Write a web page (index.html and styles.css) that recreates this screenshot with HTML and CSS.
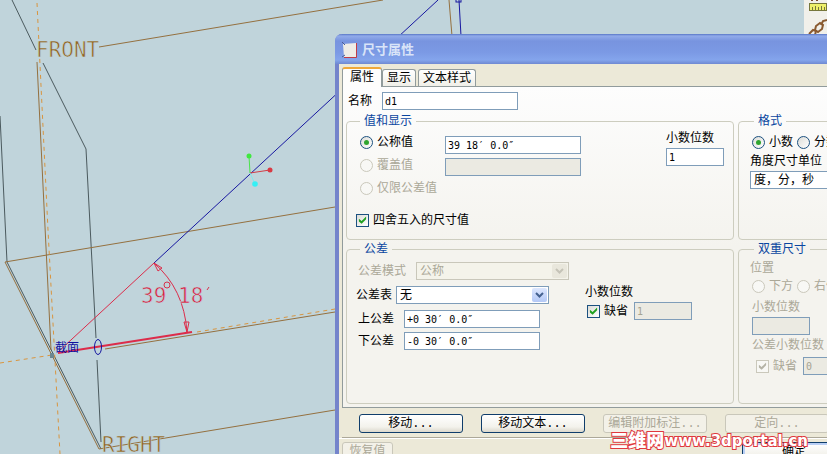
FILE: index.html
```
<!DOCTYPE html>
<html lang="zh-CN">
<head>
  <meta charset="UTF-8">
  <title>尺寸属性</title>
  <link rel="stylesheet" href="styles.css">
</head>
<body>
  <!-- Sketch view -->
  <svg class="sketch" aria-hidden="true">
    <g class="edge">
      <path d="M12 0L36 50M43 63L86 149L96 338M97 360L101 442"/>
      <path d="M0 116L7 262L101 449"/>
    </g>
    <g class="datum">
      <path d="M99 47L383 0M5 262L335 207M5 262L99 449L335 410"/>
      <path d="M37 62L51 350M105 349L335 312M449 0L452 36"/>
    </g>
    <g class="axis">
      <path d="M37 3L48 230L60 454M0 363L52 355M197 332L335 309"/>
    </g>
    <g class="curve">
      <path d="M154 263L438 0M459 0L461 36"/>
      <rect x="456" y="-2" width="5" height="4"/>
    </g>
    <g class="dim">
      <path d="M58 352L154 263"/>
      <path d="M58 353L192 332" stroke-width="2"/>
      <path d="M154 263Q184 289 187 332M154 263L158 271L162 268ZM187 332L184 322L189 322Z"/>
    </g>
    <path d="M250 173L249 156" stroke="#4be34b"/>
    <path d="M250 173L270 170" stroke="#d23c46"/>
    <path d="M250 173L255 184" stroke="#7fe8f0"/>
    <circle cx="249" cy="156" r="2.5" fill="#3fe83f"/>
    <circle cx="270" cy="170" r="2.5" fill="#d83a44"/>
    <circle cx="255" cy="184" r="2.8" fill="#35f0f5"/>
    <rect x="50" y="353" width="4" height="5" fill="#6d8790"/>
    <text class="cad cad-datum" x="36" y="57">FRONT</text>
    <text class="cad cad-datum" x="102" y="452">RIGHT</text>
    <text class="cad cad-dim" x="141" y="303">39</text>
    <text class="cad cad-dim" x="178" y="303">18</text>
    <circle cx="167" cy="285" r="3" fill="none" stroke="#d8304c"/>
    <path d="M209 287L207 290" stroke="#d8304c"/>
    <text class="cad-section" x="55" y="352">截面</text>
    <ellipse cx="98" cy="347" rx="3.5" ry="7.5" fill="none" stroke="#1414a0"/>
  </svg>

  <div class="toolbar">
    <svg width="23" height="36" viewBox="0 0 23 36">
      <path d="M8 0v1M13 0v1" stroke="#7a4a2a" stroke-width="2"/>
      <rect x="5.500" y="3.500" width="17" height="7" fill="#eef06a" stroke="#77773c"/>
      <path d="M8.500 7v3M11.500 6v4M14.500 7v3M17.500 6v4M20.500 7v3" stroke="#77773c"/>
      <g fill="none" stroke="#8a5a30" stroke-width="2">
        <path d="M5 34l4-4l3 1l-1 4"/>
        <path d="M11 30l1-4l4-3l3 2l-1 4l-4 3z"/>
        <path d="M17 25l2-4l4-1"/>
      </g>
    </svg>
  </div>

  <main class="dialog">
    <header class="titlebar">
      <svg width="16" height="16" viewBox="0 0 16 16">
        <path d="M1 2L14 1L15 15L2 15Z" fill="#efece6"/>
        <path d="M14.500 1V15.500H2" fill="none" stroke="#c23b46"/>
        <path d="M0 0L3 3M0 15L3 13" stroke="#4a5a94"/>
      </svg>
      <h1>尺寸属性</h1>
    </header>

    <nav class="tabs" role="tablist">
      <button type="button" class="tab active" role="tab" aria-selected="true">属性</button>
      <button type="button" class="tab" role="tab">显示</button>
      <button type="button" class="tab" role="tab">文本样式</button>
    </nav>

    <form class="panel">
      <div class="name-row">
        <label for="dimName">名称</label>
        <input type="text" id="dimName" class="field" value="d1">
      </div>

      <div class="groups">
        <fieldset class="group values">
          <legend>值和显示</legend>
          <div class="columns">
            <div class="options">
              <label class="choice"><input type="radio" name="valueMode" checked>公称值</label>
              <label class="choice"><input type="radio" name="valueMode" disabled>覆盖值</label>
              <label class="choice"><input type="radio" name="valueMode" disabled>仅限公差值</label>
            </div>
            <div class="value-fields">
              <input type="text" class="field" aria-label="公称值" value="39 18′ 0.0″">
              <input type="text" class="field" aria-label="覆盖值" disabled>
            </div>
            <div class="decimals">
              <label for="decimals">小数位数</label>
              <input type="text" id="decimals" class="field short" value="1">
            </div>
          </div>
          <label class="choice rounded"><input type="checkbox" checked>四舍五入的尺寸值</label>
        </fieldset>

        <fieldset class="group format">
          <legend>格式</legend>
          <div class="pair">
            <label class="choice"><input type="radio" name="format" checked>小数</label>
            <label class="choice"><input type="radio" name="format">分数</label>
          </div>
          <label for="angleUnits">角度尺寸单位</label>
          <div class="select">
            <select id="angleUnits"><option>度，分，秒</option></select>
            <svg width="15" height="14" viewBox="0 0 15 14"><path d="M4 5L7.500 8.500L11 5"/></svg>
          </div>
        </fieldset>

        <fieldset class="group tolerance">
          <legend>公差</legend>
          <div class="tol-main">
            <div class="tol-row off">
              <label for="tolMode">公差模式</label>
              <div class="select">
                <select id="tolMode" disabled><option>公称</option></select>
                <svg width="15" height="14" viewBox="0 0 15 14"><path d="M4 5L7.500 8.500L11 5"/></svg>
              </div>
            </div>
            <div class="tol-row">
              <label for="tolTable">公差表</label>
              <div class="select">
                <select id="tolTable"><option>无</option></select>
                <svg width="15" height="14" viewBox="0 0 15 14"><path d="M4 5L7.500 8.500L11 5"/></svg>
              </div>
            </div>
            <div class="limits">
              <label for="upperTol">上公差</label>
              <input type="text" id="upperTol" class="field" value="+0 30′ 0.0″">
              <label for="lowerTol">下公差</label>
              <input type="text" id="lowerTol" class="field" value="-0 30′ 0.0″">
            </div>
          </div>
          <div class="tol-decimals">
            <span>小数位数</span>
            <div class="default-row">
              <label class="choice"><input type="checkbox" checked>缺省</label>
              <input type="text" class="field short" aria-label="公差小数位数" value="1" disabled>
            </div>
          </div>
        </fieldset>

        <fieldset class="group dual off">
          <legend>双重尺寸</legend>
          <span>位置</span>
          <div class="pair">
            <label class="choice"><input type="radio" name="dualPos" disabled>下方</label>
            <label class="choice"><input type="radio" name="dualPos" disabled>右侧</label>
          </div>
          <div class="dual-decimals">
            <label for="dualDecimals">小数位数</label>
            <input type="text" id="dualDecimals" class="field short" disabled>
            <span>公差小数位数</span>
            <div class="default-row">
              <label class="choice"><input type="checkbox" checked disabled>缺省</label>
              <input type="text" class="field short" aria-label="双重公差小数位数" value="0" disabled>
            </div>
          </div>
        </fieldset>
      </div>
    </form>

    <div class="actions">
      <button type="button">移动...</button>
      <button type="button">移动文本...</button>
      <button type="button" disabled>编辑附加标注...</button>
      <button type="button" disabled>定向...</button>
    </div>
    <footer class="footer">
      <button type="button" class="restore" disabled>恢复值</button>
      <button type="submit" class="ok">确定</button>
    </footer>
  </main>

  <div class="watermark"><b>三维网</b>www.3dportal.cn</div>
</body>
</html>
```
FILE: styles.css
```
* {
  box-sizing: border-box;
}
body {
  margin: 0;
  height: 100vh;
  overflow: hidden;
  position: relative;
  background: #c0d4db;
  color: #000;
  font-family: "Liberation Sans", "Noto Sans CJK SC", sans-serif;
  font-size: 12px;
  line-height: 14px;
}
button, input, select {
  font: inherit;
  color: inherit;
  margin: 0;
}

/* sketch view */
.sketch {
  position: absolute;
  width: 100%;
  height: 100%;
}
.edge, .datum, .axis, .curve, .dim {
  fill: none;
  stroke-width: 1;
}
.edge { stroke: #4b5a5e; }
.datum { stroke: #94703f; }
.axis { stroke: #d9953f; stroke-dasharray: 4 4; }
.curve { stroke: #1717a0; }
.dim { stroke: #dc2c4a; }
.cad {
  font-family: "DejaVu Sans Mono", monospace;
  font-size: 21px;
  stroke: #c0d4db;
  stroke-width: 0.6px;
}
.cad-datum { fill: #94651f; }
.cad-dim { fill: #dc2040; }
.cad-section {
  font-family: "Noto Sans CJK SC", sans-serif;
  font-size: 12px;
  fill: #1010a0;
}
.toolbar {
  position: absolute;
  top: 0;
  right: 0;
  width: 23px;
  height: 100%;
  background: #f1f0ea;
}

/* dialog window, runs off the right edge of the screen */
.dialog {
  position: absolute;
  top: 34px;
  left: 335px;
  right: -63px;
  background: #ece9d8;
  border: solid #7484cb;
  border-width: 0 4px 4px;
  border-radius: 7px 7px 0 0;
}
.titlebar {
  display: flex;
  align-items: center;
  gap: 4px;
  height: 30px;
  margin: 0 -4px;
  padding: 2px 7px 0;
  border-radius: 7px 7px 0 0;
  background: linear-gradient(#5876c6, #91abea 2px, #7894df 7px, #7b99e4 18px, #84a5ec 26px, #6f89d2);
}
.titlebar h1 {
  margin: 0;
  font-size: 13px;
  font-weight: bold;
  color: #d9e4f8;
}
.tabs {
  display: flex;
  align-items: flex-end;
  height: 22px;
  padding-left: 3px;
}
.tab {
  height: 17px;
  margin-right: 2px;
  padding: 0 4px;
  border: 1px solid #919b9c;
  border-bottom: 0;
  border-radius: 3px 3px 0 0;
  background: linear-gradient(#fff, #f0efe8);
}
.tab.active {
  position: relative;
  height: 20px;
  margin: 0 0 -1px;
  padding: 0 7px 2px;
  border-top: 2px solid #f0a83a;
  background: #fdfdfc;
}
.panel {
  margin-left: 3px;
  padding: 5px 3px 3px;
  border: 1px solid #919b9c;
  background: linear-gradient(#fdfdfd, #f4f3ee 50%);
}
.name-row {
  display: flex;
  align-items: center;
  gap: 10px;
  padding-left: 2px;
  margin-bottom: 4px;
}
.field {
  display: block;
  width: 136px;
  height: 18px;
  padding: 0 2px;
  border: 1px solid #7f9db9;
  border-radius: 0;
  background: #fff;
  font-family: "DejaVu Sans Mono", monospace;
  font-size: 10px;
}
.field.short { width: 58px; }
.field:disabled {
  background: #ebeae2;
  color: #a5a392;
}

/* groups */
.groups {
  display: grid;
  grid-template-columns: minmax(388px, 1fr) 146px;
  gap: 2px 4px;
}
.group {
  min-width: 0;
  margin: 0;
  padding: 0 9px;
  border: 1px solid #cdcdbf;
  border-radius: 4px;
}
.group legend {
  margin-left: 4px;
  padding: 0 4px;
  color: #0a46a0;
}
.columns { display: flex; }
.options {
  width: 89px;
  padding: 5px 0 0 4px;
  display: flex;
  flex-direction: column;
  gap: 5px;
  white-space: nowrap;
}
.value-fields {
  display: grid;
  gap: 4px;
  align-content: start;
  padding-top: 8px;
}
.decimals {
  margin-left: auto;
  display: grid;
  gap: 3px;
  align-content: start;
  padding-top: 3px;
}
.rounded { margin: 14px 0 10px; }

.choice {
  display: flex;
  align-items: center;
  gap: 4px;
  height: 18px;
  white-space: nowrap;
}
.choice:has(:disabled), .off { color: #aba898; }
.choice input {
  appearance: none;
  flex: none;
  display: grid;
  place-items: center;
  width: 13px;
  height: 13px;
  border: 1px solid #1c5180;
  background: linear-gradient(135deg, #dcdcd7, #fff);
}
.choice input[type="radio"] { border-radius: 50%; }
.choice input:checked::before {
  content: "";
  width: 5px;
  height: 5px;
  border-radius: 50%;
  background: #2fa52f;
}
.choice input[type="checkbox"]:checked::before {
  width: 9px;
  height: 9px;
  border-radius: 0;
  background: #21a121;
  clip-path: polygon(10% 35%, 40% 62%, 90% 10%, 90% 42%, 40% 92%, 10% 66%);
}
.choice input:disabled {
  border-color: #cac8bb;
  background: #f8f8f5;
}
.choice input[type="checkbox"]:disabled::before { background: #b5b3a6; }

.select {
  display: grid;
  align-items: center;
  width: 153px;
}
.select select, .select svg { grid-area: 1 / 1; }
.select select {
  appearance: none;
  width: 100%;
  height: 18px;
  padding: 0 3px;
  border: 1px solid #7f9db9;
  border-radius: 0;
  background: #fff;
}
.select svg {
  justify-self: end;
  margin-right: 2px;
  border-radius: 2px;
  background: linear-gradient(#dde7fe, #b3c8f6);
  pointer-events: none;
}
.select path {
  fill: none;
  stroke: #44618f;
  stroke-width: 2;
}
.select select:disabled {
  border-color: #c9c7ba;
  background: #f4f3ea;
  color: #aba898;
  opacity: 1;
}
.off .select svg { background: #e9e7dc; }
.off .select path { stroke: #c5c3b7; }

.tolerance {
  display: flex;
  gap: 16px;
  padding-top: 6px;
}
.tol-main {
  display: grid;
  gap: 6px;
  align-content: start;
}
.tol-row {
  display: flex;
  align-items: center;
  gap: 4px;
}
.tol-row.off {
  gap: 10px;
  padding-left: 2px;
}
.limits {
  display: grid;
  grid-template-columns: 36px 136px;
  gap: 4px 10px;
  align-items: center;
  padding-left: 2px;
}
.tol-decimals {
  display: grid;
  gap: 3px;
  align-content: start;
  padding-top: 23px;
}
.default-row {
  display: flex;
  align-items: center;
  gap: 6px;
}
.tol-decimals .default-row { padding-left: 2px; }

.format, .dual { padding: 0 11px; }
.pair {
  display: flex;
  gap: 4px;
  padding-left: 2px;
}
.format .pair { margin: 5px 0 3px; }
.format .select {
  width: 118px;
  margin-top: 3px;
}
.dual { padding-top: 5px; }
.dual .pair { margin: 2px 0 5px; }
.dual-decimals {
  display: grid;
  gap: 3px;
  padding: 0 0 28px 2px;
}
.dual-decimals .default-row {
  margin-top: 2px;
  padding-left: 4px;
}
.dual-decimals span { white-space: nowrap; }

/* buttons */
.actions {
  display: flex;
  gap: 18px;
  margin-left: 3px;
  padding: 6px 17px 4px;
  border-bottom: 1px solid #aca899;
}
.actions button, .footer button {
  flex: none;
  width: 104px;
  height: 19px;
  padding: 0;
  border: 1px solid #0f3d6b;
  border-radius: 3px;
  background: linear-gradient(#fff, #f3f2ec 70%, #dcd8cc);
  font-family: "Liberation Mono", "Noto Sans CJK SC", monospace;
  line-height: 14px;
  white-space: nowrap;
}
.actions button:disabled, .footer button:disabled {
  border-color: #c9c7ba;
  background: #f3f1e8;
  color: #aba898;
}
.footer {
  display: flex;
  justify-content: space-between;
  padding: 3px 40px 6px 3px;
  border-top: 1px solid #fff;
}
.footer .restore { width: 51px; }
.footer .ok { box-shadow: inset 0 0 0 2px #b9cff5; }

.watermark {
  position: absolute;
  right: 19px;
  bottom: 3px;
  display: flex;
  align-items: center;
  height: 20px;
  color: #fff;
  font-family: "DejaVu Sans", "Noto Sans CJK SC", sans-serif;
  font-size: 15px;
  font-weight: bold;
  -webkit-text-stroke: 2px #e0383e;
  paint-order: stroke fill;
  white-space: nowrap;
}
.watermark b { font-size: 18px; }
```
